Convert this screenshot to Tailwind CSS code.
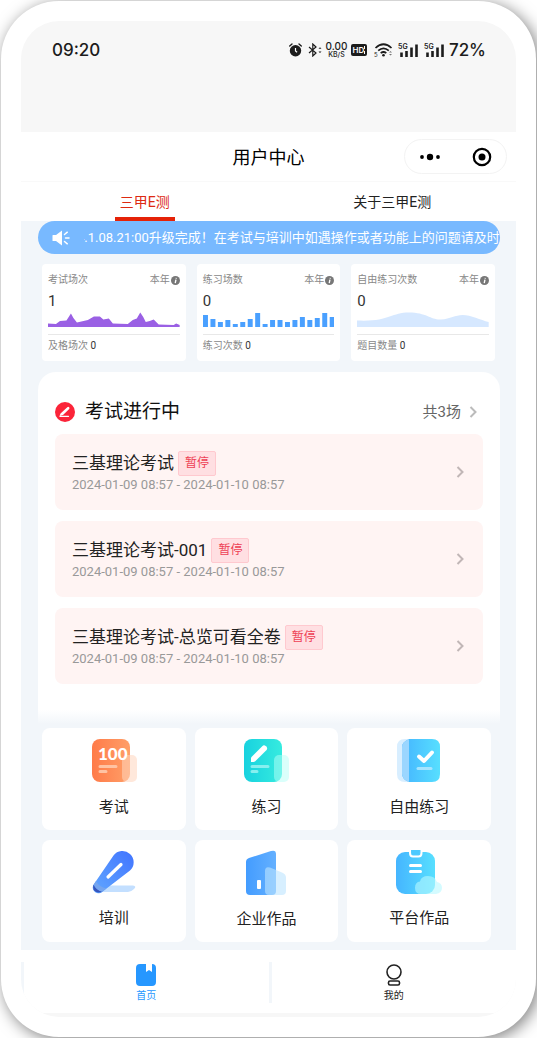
<!DOCTYPE html>
<html lang="zh-CN">
<head>
<meta charset="utf-8">
<meta name="viewport" content="width=device-width, initial-scale=1">
<title>用户中心</title>
<script src="https://cdn.jsdelivr.net/npm/@tailwindcss/browser@4"></script>
</head>
<body class="bg-white font-[Roboto,'Noto_Sans_CJK_SC',sans-serif] text-[#222]">
<div class="overflow-hidden p-px">
<div class="rounded-[58px] bg-white p-5 shadow-[3px_3px_16px_rgba(0,0,0,0.5)]">
<div class="overflow-hidden rounded-[38px] bg-[#f7f7f7] pb-1">

  <!-- Status bar -->
  <div class="flex h-[111px] items-start justify-between pt-[18px] pr-[30px] pl-[31px] font-[Inter,sans-serif] text-[#1c1c1c]">
    <span class="text-[17px] leading-[22px] font-medium">09:20</span>
    <div class="flex h-[22px] items-center">
      <svg class="h-[14px] w-[13px]" viewBox="0 0 13 14"><circle cx="6.5" cy="7.8" r="5.7" fill="#1c1c1c"/><path d="M.7 3 3 .9M12.3 3 10 .9" stroke="#1c1c1c" stroke-width="1.3" stroke-linecap="round"/><path d="M6.5 5v3l1.6 1.2" stroke="#fff" stroke-width="1.2" fill="none"/></svg>
      <svg class="ml-[6px] h-[14px] w-[14px]" viewBox="0 0 14 14" fill="none" stroke="#1c1c1c" stroke-width="1.2"><path d="m1 4 7 6-3.2 3V1L8 4 1 10"/><path d="M10.5 5.8 12 4.2l1.5 1.6zM10.5 8.6h3L12 10z" fill="#1c1c1c" stroke="none"/></svg>
      <div class="ml-1 flex w-[21px] flex-col items-center font-medium">
        <span class="text-[10px] leading-[9px]">0.00</span><span class="text-[7px] leading-[7px]">KB/S</span>
      </div>
      <svg class="ml-1 h-3 w-4" viewBox="0 0 16 12"><rect width="16" height="12" rx="2" fill="#1c1c1c"/><text x="1.5" y="9" font-size="8" font-weight="600" fill="#fff">HD</text><path d="M13.5 2v3M13.5 7v3" stroke="#fff"/></svg>
      <svg class="ml-[7px] h-[14px] w-[19px]" viewBox="0 0 19 14" fill="none" stroke="#1c1c1c" stroke-width="1.7"><path d="M1.5 5Q9.500-2.500 17.500 5M4.200 7.700Q9.500 3 14.800 7.700M6.700 10.200Q9.500 7.800 12.300 10.200"/><circle cx="9.500" cy="12.300" r="1.300" fill="#1c1c1c" stroke="none"/><path d="m15 9.500 1.500-1.500L18 9.500zM15 11h3l-1.500 1.500z" fill="#777" stroke="none"/><text x="0" y="13.500" font-size="6" fill="#1c1c1c" stroke="none">5</text></svg>
      <svg class="ml-[5px] h-[14px] w-5" viewBox="0 0 20 14"><text x="0" y="6" font-size="7" font-weight="600" fill="#1c1c1c">5G</text><path d="M3.500 9.500V14M8.500 8V14M13.500 4.500V14M18.500 1.500V14" stroke="#1c1c1c" stroke-width="2.600"/></svg>
      <svg class="ml-[6px] h-[14px] w-5" viewBox="0 0 20 14"><text x="0" y="6" font-size="7" font-weight="600" fill="#1c1c1c">5G</text><path d="M3.500 9.500V14M8.500 8V14M13.500 4.500V14M18.500 1.500V14" stroke="#1c1c1c" stroke-width="2.600"/></svg>
      <span class="ml-[5px] text-[17px] leading-[22px] font-medium">72%</span>
    </div>
  </div>

  <!-- Title bar -->
  <header class="grid h-[49px] grid-cols-[1fr_auto_1fr] items-center bg-white pr-[9px] pl-[9px]">
    <span></span>
    <h1 class="pt-0.5 text-lg text-black">用户中心</h1>
    <div class="flex h-[35px] w-[103px] items-center justify-between justify-self-end rounded-full border border-[#f3f3f3] pr-3.5 pl-3.5">
      <button type="button" aria-label="更多"><svg class="h-5 w-[22px]" viewBox="0 0 22 20"><circle cx="3" cy="10" r="1.900"/><circle cx="11" cy="10" r="3.200"/><circle cx="19" cy="10" r="1.900"/></svg></button>
      <button type="button" aria-label="关闭"><svg class="h-5 w-5" viewBox="0 0 20 20"><circle cx="10" cy="10" r="8.200" fill="none" stroke="#000" stroke-width="2.200"/><circle cx="10" cy="10" r="3.500"/></svg></button>
    </div>
  </header>

  <!-- Tabs -->
  <nav class="grid h-10 grid-cols-2 border-t border-[#f9f9f9] bg-white text-sm">
    <button type="button" class="flex flex-col items-center justify-between text-[#dd2a12]"><span class="pt-[10px]">三甲E测</span><span class="h-1 w-[60px] bg-[#e52207]"></span></button>
    <button type="button" class="flex flex-col items-center"><span class="pt-[10px]">关于三甲E测</span></button>
  </nav>

  <main class="bg-[#f2f6fa] px-4 pb-2">
    <!-- Announcement -->
    <div class="ml-px flex h-[33px] items-center overflow-hidden rounded-full bg-[#78b9ff] pl-3.5 text-white">
      <svg class="h-4 w-[18px] shrink-0" viewBox="0 0 18 16"><path d="M1 5h3l6-4.500v15L4 11H1Q.5 11 .5 10.500v-5Q.5 5 1 5z" fill="#fff"/><path d="m12.500 4.500 2.800-2.300M13.500 8H17M12.500 11.500l2.800 2.300" stroke="#fff" stroke-width="1.500" stroke-linecap="round"/></svg>
      <div class="ml-3.5 flex-1 overflow-hidden text-[13px] whitespace-nowrap"><p class="-ml-[29px]">2024.1.08.21:00升级完成！在考试与培训中如遇操作或者功能上的问题请及时联</p></div>
    </div>

    <!-- Statistics -->
    <section class="mt-[10px] grid grid-cols-3 gap-[11px] px-[5px] text-[10px] text-[#888]">
      <article class="rounded bg-white px-[6px] pt-[9px] pb-2">
        <div class="flex items-center justify-between leading-[14px]"><span>考试场次</span><span class="flex items-center">本年<svg class="ml-px h-[9px] w-[9px]" viewBox="0 0 10 10"><circle cx="5" cy="5" r="5" fill="#777"/><path d="m5.500 4-.8 4M5.900 2l-.2 1" stroke="#fff" stroke-width="1.500"/></svg></span></div>
        <p class="mt-1 text-[15px] leading-5 text-[#333]">1</p>
        <svg class="mt-px h-[15px] w-full" viewBox="0 0 132 15" preserveAspectRatio="none"><path d="M0 11.500 8 12 12 9 18.500 8.500 23 1.500 25.500 6 29 10.500 40 8 46 4.500H52L55.500 7.500 61 6.500 65 11.500 80 12 85 8 89 6.500 92.500.5 95.500 5 98 10 102 9 106 7.500 111 12.500 126 13 128.500 11.500 132 13V15H0z" fill="#9a60e4"/></svg>
        <p class="mt-[7px] border-t border-[#e8e8e8] pt-1 leading-[14px]">及格场次 <span class="text-[#333]">0</span></p>
      </article>
      <article class="rounded bg-white px-[6px] pt-[9px] pb-2">
        <div class="flex items-center justify-between leading-[14px]"><span>练习场数</span><span class="flex items-center">本年<svg class="ml-px h-[9px] w-[9px]" viewBox="0 0 10 10"><circle cx="5" cy="5" r="5" fill="#777"/><path d="m5.500 4-.8 4M5.900 2l-.2 1" stroke="#fff" stroke-width="1.500"/></svg></span></div>
        <p class="mt-1 text-[15px] leading-5 text-[#333]">0</p>
        <svg class="mt-px h-[15px] w-full" viewBox="0 0 132.500 15" preserveAspectRatio="none"><path d="M0 15V3H5V15zM7.500 15V7h5v8zM15 15v-5h5v5zM22.500 15V8h5v7zM30 15v-3h5v3zM37.500 15v-5h5v5zM45 15V7h5v8zM52.500 15V1h5v14zM60 15v-3h5v3zM67.500 15V8h5v7zM75 15V8h5v7zM82.500 15v-5h5v5zM90 15V8h5v7zM97.500 15V5h5v10zM105 15V8h5v7zM112.500 15V6h5v9zM120 15V1h5v14zM127.500 15V5h5v10z" fill="#4aa0ff"/></svg>
        <p class="mt-[7px] border-t border-[#e8e8e8] pt-1 leading-[14px]">练习次数 <span class="text-[#333]">0</span></p>
      </article>
      <article class="rounded bg-white px-[6px] pt-[9px] pb-2">
        <div class="flex items-center justify-between leading-[14px]"><span>自由练习次数</span><span class="flex items-center">本年<svg class="ml-px h-[9px] w-[9px]" viewBox="0 0 10 10"><circle cx="5" cy="5" r="5" fill="#777"/><path d="m5.500 4-.8 4M5.900 2l-.2 1" stroke="#fff" stroke-width="1.500"/></svg></span></div>
        <p class="mt-1 text-[15px] leading-5 text-[#333]">0</p>
        <svg class="mt-px h-[15px] w-full" viewBox="0 0 132 15" preserveAspectRatio="none"><path d="M0 8.500C32 10 34 .5 52 .5S74 8 84 7.500 98 3 106 3 124 8 132 10V15H0z" fill="#d6e8ff"/></svg>
        <p class="mt-[7px] border-t border-[#e8e8e8] pt-1 leading-[14px]">题目数量 <span class="text-[#333]">0</span></p>
      </article>
    </section>

    <!-- Exams in progress -->
    <section class="mt-[11px] ml-px rounded-t-[18px] bg-[linear-gradient(to_top,#f2f6fa_0,#fff_14px)] px-[17px] pt-[26px] pb-[40px]">
      <div class="flex items-center pb-[9px]">
        <svg class="h-5 w-5" viewBox="0 0 20 20"><circle cx="10" cy="10" r="10" fill="#fb2439"/><path d="m5.500 11.500 6.800-6.300q1-.7 1.800.1t.1 1.800L8 13l-3.400.9z" fill="#fff"/><path d="M5 14.300h8.500" stroke="#fff" stroke-width="1.300" stroke-linecap="round"/></svg>
        <h2 class="ml-[10px] flex-1 text-[19px] leading-[27px] text-[#111]">考试进行中</h2>
        <a href="#all" class="flex items-center text-[15px] leading-[22px] text-[#666]">共3场<svg class="mr-[6px] ml-2 h-3 w-2" viewBox="0 0 8 12" fill="none" stroke="#bbb" stroke-width="2"><path d="m1.500 1 5 5-5 5"/></svg></a>
      </div>
      <div class="flex flex-col gap-[11px]">
        <a href="#e1" class="flex h-[76px] items-center rounded-lg bg-[#fff4f3] px-[17px]">
          <span class="flex-1"><span class="flex items-center gap-1 text-[17px] leading-6">三基理论考试<span class="rounded-xs border border-[#ffc9cf] bg-[#ffdfe2] px-[6px] text-xs leading-[23px] text-[#ee3f55]">暂停</span></span><span class="block text-[13px] leading-[18px] text-[#999]">2024-01-09 08:57 - 2024-01-10 08:57</span></span>
          <svg class="mr-[2px] h-3 w-2" viewBox="0 0 8 12" fill="none" stroke="#c1b6b6" stroke-width="2"><path d="m1.500 1 5 5-5 5"/></svg>
        </a>
        <a href="#e2" class="flex h-[76px] items-center rounded-lg bg-[#fff4f3] px-[17px]">
          <span class="flex-1"><span class="flex items-center gap-1 text-[17px] leading-6">三基理论考试-001<span class="rounded-xs border border-[#ffc9cf] bg-[#ffdfe2] px-[6px] text-xs leading-[23px] text-[#ee3f55]">暂停</span></span><span class="block text-[13px] leading-[18px] text-[#999]">2024-01-09 08:57 - 2024-01-10 08:57</span></span>
          <svg class="mr-[2px] h-3 w-2" viewBox="0 0 8 12" fill="none" stroke="#c1b6b6" stroke-width="2"><path d="m1.500 1 5 5-5 5"/></svg>
        </a>
        <a href="#e3" class="flex h-[76px] items-center rounded-lg bg-[#fff4f3] px-[17px]">
          <span class="flex-1"><span class="flex items-center gap-1 text-[17px] leading-6">三基理论考试-总览可看全卷<span class="rounded-xs border border-[#ffc9cf] bg-[#ffdfe2] px-[6px] text-xs leading-[23px] text-[#ee3f55]">暂停</span></span><span class="block text-[13px] leading-[18px] text-[#999]">2024-01-09 08:57 - 2024-01-10 08:57</span></span>
          <svg class="mr-[2px] h-3 w-2" viewBox="0 0 8 12" fill="none" stroke="#c1b6b6" stroke-width="2"><path d="m1.500 1 5 5-5 5"/></svg>
        </a>
      </div>
    </section>

    <!-- Shortcuts -->
    <section class="mt-1 grid grid-cols-3 gap-x-[9px] gap-y-[10px] pr-[9px] pl-[5px] text-[15px] leading-[22px]">
      <a href="#exam" class="flex h-[102px] flex-col items-center gap-[13px] rounded-lg bg-white pt-[10px]">
        <svg class="h-[45px] w-[46px]" viewBox="0 0 46 45"><defs><linearGradient id="or"><stop stop-color="#ff7b49"/><stop offset="1" stop-color="#ff9f68"/></linearGradient></defs><rect x="1" y="1" width="38" height="43" rx="8" fill="url(#or)"/><rect x="31" y="17" width="15" height="27" rx="5" fill="#ffd5bd" fill-opacity=".55"/><text x="7" y="22" font-family="'Liberation Sans Narrow', Lato" font-size="17" font-weight="900" fill="#fff">100</text><path d="M9 28.500H25M9 33.500h6" stroke="#ffc3a3" stroke-width="3" stroke-linecap="round"/></svg>
        <span>考试</span></a>
      <a href="#practice" class="flex h-[102px] flex-col items-center gap-[13px] rounded-lg bg-white pt-[10px]">
        <svg class="h-[45px] w-[46px]" viewBox="0 0 46 45"><defs><linearGradient id="te"><stop stop-color="#18d2df"/><stop offset="1" stop-color="#36ebdf"/></linearGradient></defs><rect x="1" y="1" width="38" height="43" rx="8" fill="url(#te)"/><rect x="31" y="17" width="15" height="27" rx="5" fill="#b5fff8" fill-opacity=".5"/><path d="M8 19.500 19.500 8q1.500-1.500 3.500.3t.6 3.700L12 23.500Q11 24 8 24z" fill="#fff"/><path d="M9 28.500H25M9 33.500h5" stroke="#87efef" stroke-width="3" stroke-linecap="round"/></svg>
        <span>练习</span></a>
      <a href="#free" class="flex h-[102px] flex-col items-center gap-[13px] rounded-lg bg-white pt-[10px]">
        <svg class="h-[45px] w-[46px]" viewBox="0 0 46 45"><defs><linearGradient id="sk"><stop stop-color="#45b5ff"/><stop offset="1" stop-color="#57dfff"/></linearGradient></defs><path d="M13 1H9Q1 1 1 9v27q0 8 8 8h4z" fill="#d8eeff"/><path d="M13 1h23q8 0 8 8v27q0 8-8 8H13q-7-3-7-8V9q0-5 7-8z" fill="url(#sk)"/><path d="M13 1q-7 3-7 8v27q0 5 7 8z" fill="#9bd6ff"/><path d="m23 18.500 5 4.500 8-8.500" fill="none" stroke="#fff" stroke-width="4" stroke-linecap="round" stroke-linejoin="round"/><path d="M22 30.500h13" stroke="#a5e4ff" stroke-width="3" stroke-linecap="round"/></svg>
        <span>自由练习</span></a>
      <a href="#train" class="flex h-[102px] flex-col items-center gap-3 rounded-lg bg-white pt-[10px]">
        <svg class="h-[45px] w-[46px]" viewBox="0 0 46 45"><defs><linearGradient id="bl" x1="1" y1="0" x2="0" y2="1"><stop stop-color="#4174ff"/><stop offset="1" stop-color="#62a8ff"/></linearGradient></defs><path d="M10 41.500 17 35.500H42q4 .5 1 3.500-3 3-6 3H9z" fill="#c3dfff"/><path d="M3 34 22.500 5.500A11.200 11.200 0 1 1 39 20.500L12 41.200A5.300 5.300 0 0 1 3 34z" fill="url(#bl)"/><path d="M2.500 34.500q-2 6.500 4.500 8 3 0 4.500-1Q5 40 2.500 34.500z" fill="#3554bc"/><path d="M2.800 34.500Q5 40 11 41.800l4.500-3.300Q8 37 5 31z" fill="#75a5ef"/><path d="M17 27 30 14.500" stroke="#fff" stroke-width="3.200" stroke-linecap="round"/></svg>
        <span>培训</span></a>
      <a href="#company" class="flex h-[102px] flex-col items-center gap-[13px] rounded-lg bg-white pt-[10px]">
        <svg class="h-[45px] w-[46px]" viewBox="0 0 46 45"><defs><linearGradient id="bu"><stop stop-color="#439cff"/><stop offset="1" stop-color="#64b0ff"/></linearGradient></defs><path d="M3 12Q3 9 6 8L28 1q5-1.500 5 3V41q0 4-4 4H7q-4 0-4-4z" fill="url(#bu)"/><path d="M22 21q0-5 5-3.500l12 5q4 1.500 4 5V41q0 4-4 4H26q-4 0-4-4z" fill="#bce5ff" fill-opacity=".6"/><rect x="14" y="30" width="4" height="9" rx="1" fill="#fff"/></svg>
        <span>企业作品</span></a>
      <a href="#platform" class="flex h-[102px] flex-col items-center gap-3 rounded-lg bg-white pt-[10px]">
        <svg class="h-[45px] w-[46px]" viewBox="0 0 46 45"><rect y="2" width="39" height="42" rx="9" fill="url(#sk)"/><path d="M14 0v3q0 3.500 3 3.500h5.500q3 0 3-3.500V0" fill="#54caff" stroke="#fff" stroke-width="2"/><rect x="16" y="0" width="7.500" height="4.500" rx="1" fill="#4bc9ff"/><path d="M14.500 15.500h10M14.500 21.500h10" stroke="#fff" stroke-width="3" stroke-linecap="round"/><path d="M25 44q-6 0-6-6t5-6.500Q25 26 32 26t9 6q5 1 5 6t-6 6z" fill="#b8f8ff" fill-opacity=".6"/></svg>
        <span>平台作品</span></a>
    </section>
  </main>

  <!-- Bottom navigation -->
  <nav class="grid h-[63px] grid-cols-2 bg-white py-3 text-[10px] leading-[14px]">
    <a href="#home" class="flex flex-col items-center gap-[3px] border-l-3 border-[#f2f6fa] pt-[2px] text-[#2697ff]">
      <svg class="h-[22px] w-5 shrink-0" viewBox="0 0 20 22"><path d="M4 0h6v8l3-2 3 2V0q4 0 4 4v14q0 4-4 4H4q-4 0-4-4V4q0-4 4-4z" fill="#2697ff"/></svg>首页</a>
    <a href="#mine" class="flex flex-col items-center gap-[3px] border-l-3 border-[#f2f6fa] pt-[2px]">
      <svg class="h-[22px] w-5 shrink-0" viewBox="0 0 20 22" fill="none" stroke="#222" stroke-width="1.600"><circle cx="10" cy="8" r="7"/><rect x="4.500" y="17" width="11" height="4" rx="1.500"/></svg>我的</a>
  </nav>
</div>
</div>
</div>
</body>
</html>
